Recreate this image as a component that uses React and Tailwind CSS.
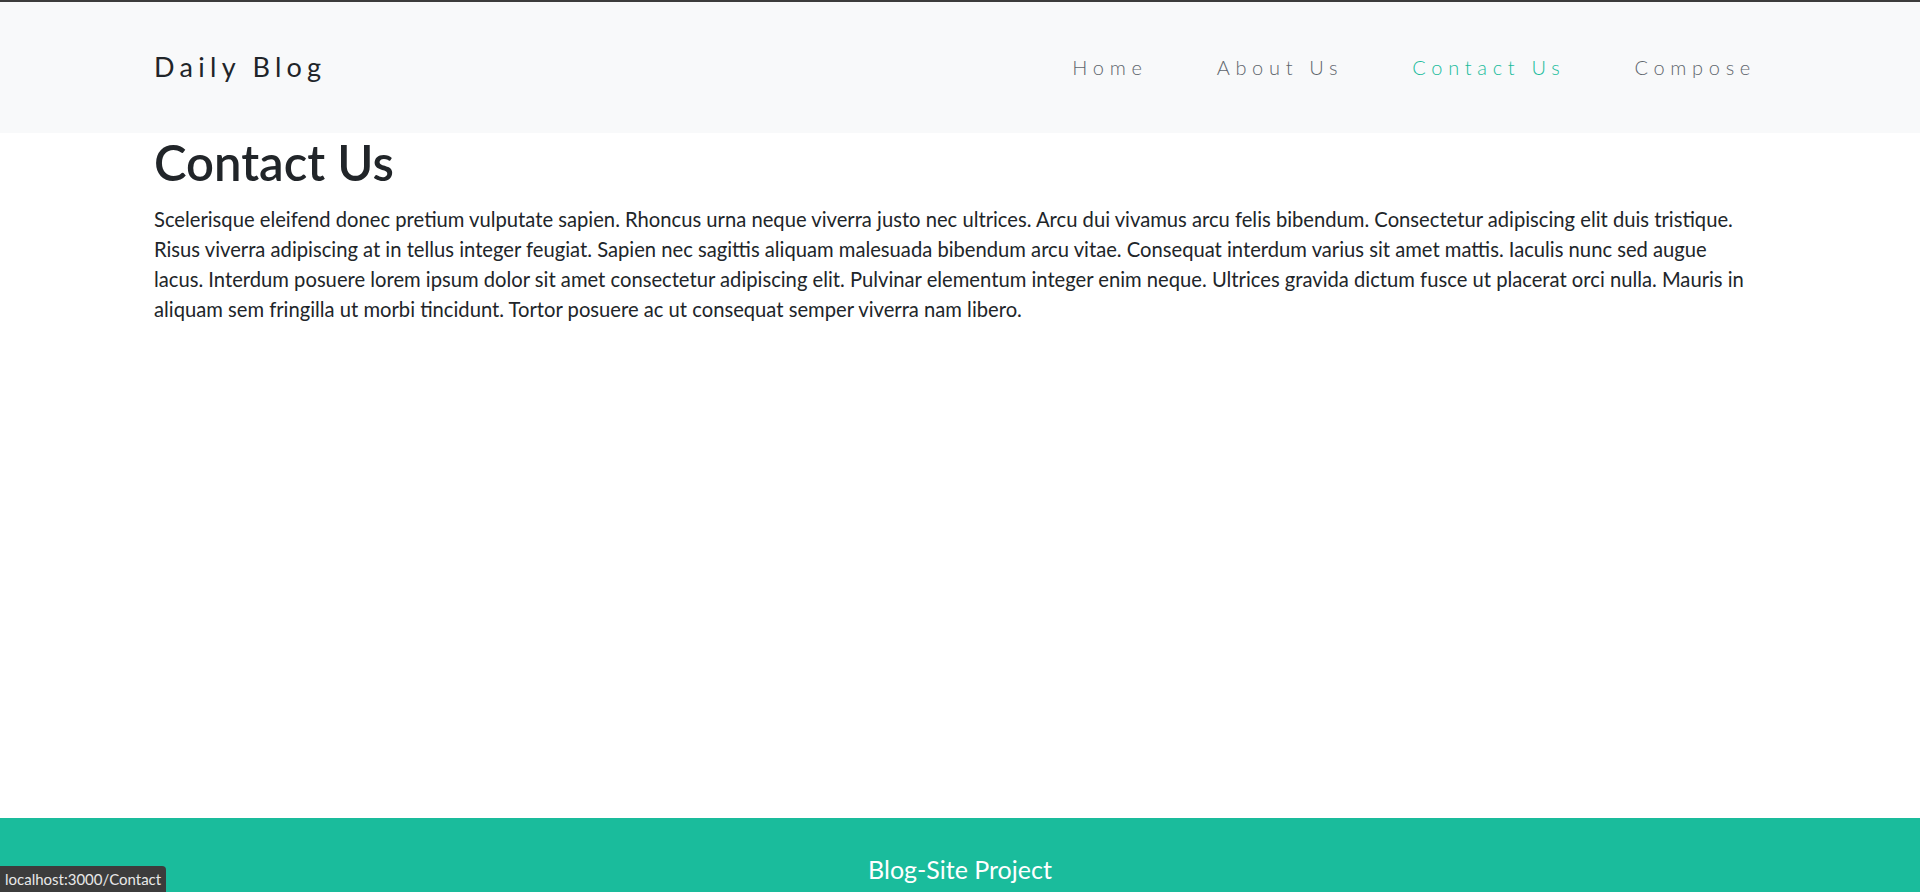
import React from 'react';

const links = [
  { label: 'Home', active: false },
  { label: 'About Us', active: false },
  { label: 'Contact Us', active: true },
  { label: 'Compose', active: false }
];

const body =
  'Scelerisque eleifend donec pretium vulputate sapien. Rhoncus urna neque viverra justo nec ultrices. Arcu dui vivamus arcu felis bibendum. Consectetur adipiscing elit duis tristique. Risus viverra adipiscing at in tellus integer feugiat. Sapien nec sagittis aliquam malesuada bibendum arcu vitae. Consequat interdum varius sit amet mattis. Iaculis nunc sed augue lacus. Interdum posuere lorem ipsum dolor sit amet consectetur adipiscing elit. Pulvinar elementum integer enim neque. Ultrices gravida dictum fusce ut placerat orci nulla. Mauris in aliquam sem fringilla ut morbi tincidunt. Tortor posuere ac ut consequat semper viverra nam libero.';

export default function App() {
  return (
    <div className="relative flex h-screen flex-col overflow-hidden bg-white font-['Segoe_UI',Lato,sans-serif] text-[#212529]">
      {/* top edge of the browser */}
      <div className="h-[2px] bg-[#3c3c3c]" />

      {/* Navbar */}
      <header className="bg-[#f8f9fa]">
        <div className="mx-auto flex h-[131px] w-[1650px] items-center justify-between pl-[19px] pr-[19px]">
          <a className="text-[27px] tracking-[5.3px] text-[#212529]">Daily Blog</a>
          <nav className="-mt-[2px] flex items-center gap-[49px]">
            {links.map((link) => (
              <a
                key={link.label}
                className={`px-[10px] text-[20px] font-light tracking-[5.7px] ${
                  link.active ? 'text-[#1abc9c]' : 'text-[#5f666d]'
                }`}
              >
                {link.label}
              </a>
            ))}
          </nav>
        </div>
      </header>

      {/* Content */}
      <main className="flex-1">
        <div className="mx-auto w-[1650px] pl-[19px] pr-[15px]">
          <h1 className="mb-[12px] text-[49px] font-semibold leading-[1.2]">Contact Us</h1>
          <p className="w-[1600px] text-[20.2px] leading-[30px]">{body}</p>
        </div>
      </main>

      {/* Footer */}
      <footer className="h-[74px] bg-[#1abc9c] pt-[33px] text-center">
        <p className="text-[25px] text-white">Blog-Site Project</p>
      </footer>

      {/* link preview from the browser */}
      <div className="absolute bottom-0 left-0 rounded-tr-[4px] bg-[#3c3c3c] px-[5px] py-[2px] text-[15px] leading-[22px] text-[#e8e8e8]">
        localhost:3000/Contact
      </div>
    </div>
  );
}
